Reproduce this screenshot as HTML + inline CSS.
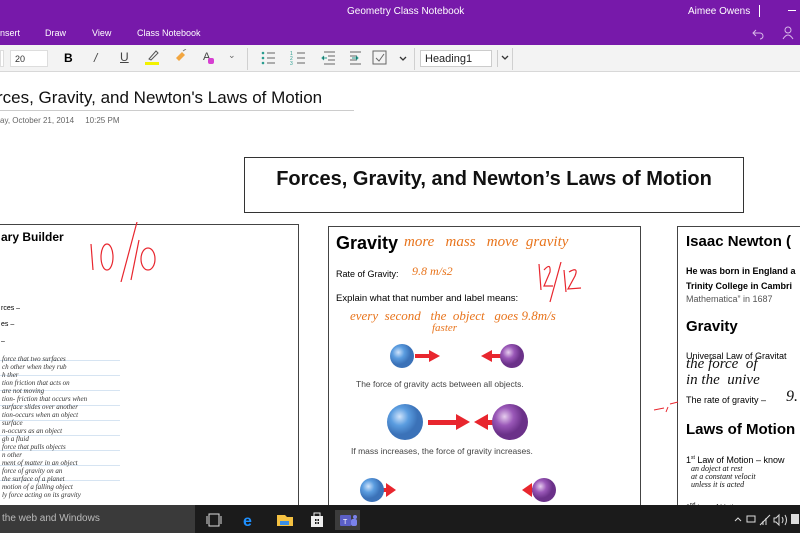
<!DOCTYPE html>
<html><head><meta charset="utf-8"><style>
*{margin:0;padding:0;box-sizing:border-box}
body{width:800px;height:533px;overflow:hidden;background:#fff;font-family:"Liberation Sans",sans-serif;position:relative}
.a{position:absolute}
.hw{position:absolute;font-family:"Liberation Serif",serif;font-style:italic;color:#e8741c;white-space:nowrap}
.card{position:absolute;border:1.5px solid #444;background:#fff}
.cal{font-family:"Liberation Sans",sans-serif}
.ln{position:absolute;left:0;width:120px;height:1px;background:#d6e4f2}
.gl{position:absolute;font-family:"Liberation Serif",serif;font-style:italic;font-size:7px;color:#333;white-space:nowrap;left:2px}
</style></head><body>
<div class="a" style="left:0;top:0;width:800px;height:45px;background:#7719aa"></div>
<div class="a" style="left:347px;top:6px;color:#fff;font-size:10px">Geometry Class Notebook</div>
<div class="a" style="left:688px;top:6px;color:#fff;font-size:10px">Aimee Owens</div>
<div class="a" style="left:759px;top:5px;width:1px;height:12px;background:#fff"></div>
<div class="a" style="left:788px;top:10px;width:8px;height:1px;background:#fff"></div>
<div class="a" style="left:0;top:28px;color:#fff;font-size:9px">nsert</div>
<div class="a" style="left:45px;top:28px;color:#fff;font-size:9px">Draw</div>
<div class="a" style="left:92px;top:28px;color:#fff;font-size:9px">View</div>
<div class="a" style="left:137px;top:28px;color:#fff;font-size:9px">Class Notebook</div>
<svg class="a" style="left:752px;top:26px" width="45" height="14"><path d="M4 4 L1 7 L4 10 M1 7 H8 A3 3 0 0 1 8 13" stroke="#d8b8e8" fill="none" stroke-width="1"/><circle cx="36" cy="4" r="3" stroke="#d8b8e8" fill="none"/><path d="M31 13 Q36 5 41 13" stroke="#d8b8e8" fill="none"/></svg>
<div class="a" style="left:0;top:45px;width:800px;height:27px;background:#f3f3f3;border-bottom:1px solid #d8d8d8"></div>
<div class="a" style="left:0;top:50px;width:4px;height:17px;background:#fff;border:1px solid #ddd"></div>
<div class="a" style="left:10px;top:50px;width:38px;height:17px;background:#fff;border:1px solid #ddd;font-size:9px;padding:3px 0 0 4px;color:#333">20</div>
<div class="a" style="left:64px;top:51px;font-size:12px;font-weight:bold">B</div>
<div class="a" style="left:94px;top:51px;font-size:12px;font-style:italic;color:#444">/</div>
<div class="a" style="left:120px;top:50px;font-size:12px;text-decoration:underline;color:#444">U</div>
<div class="a" style="left:145px;top:62px;width:14px;height:3px;background:#f2f200"></div>
<svg class="a" style="left:147px;top:49px" width="12" height="12"><path d="M2 10 L9 2 L11 4 L4 11Z" stroke="#555" fill="none"/></svg>
<svg class="a" style="left:174px;top:49px" width="14" height="14"><path d="M2 9 L8 3 L11 6 L5 12Z" fill="#f2a640"/><path d="M9 2 L12 0" stroke="#777"/></svg>
<div class="a" style="left:203px;top:51px;font-size:11px;color:#444">A</div>
<div class="a" style="left:208px;top:58px;width:6px;height:6px;background:#d63fd1;border-radius:2px"></div>
<div class="a" style="left:228px;top:50px;font-size:9px;color:#666">⌄</div>
<div class="a" style="left:247px;top:48px;width:1px;height:22px;background:#d0d0d0"></div>
<svg class="a" style="left:260px;top:50px" width="160" height="16"><g fill="#2a9d8f"><circle cx="3" cy="3" r="1.3"/><circle cx="3" cy="8" r="1.3"/><circle cx="3" cy="13" r="1.3"/></g><g stroke="#666"><path d="M7 3H15M7 8H15M7 13H15"/><path d="M37 3H45M37 8H45M37 13H45"/><path d="M64 2H75M68 6H75M68 10H75M64 14H75"/><path d="M90 2H101M90 6H97M90 10H97M90 14H101"/></g><g fill="#2a9d8f" font-size="5"><text x="30" y="5">1</text><text x="30" y="10">2</text><text x="30" y="15">3</text></g><path d="M67 8 L62 8 M64 6 L62 8 L64 10" stroke="#2a9d8f"/><path d="M92 8 L98 8 M96 6 L98 8 L96 10" stroke="#2a9d8f"/><rect x="113" y="1" width="13" height="13" stroke="#666" fill="none"/><path d="M116 8 L119 11 L124 4" stroke="#666" fill="none"/><path d="M140 7 L143 10 L146 7" stroke="#333" fill="none" stroke-width="1.3"/></svg>
<div class="a" style="left:414px;top:48px;width:1px;height:22px;background:#d0d0d0"></div>
<div class="a" style="left:420px;top:50px;width:72px;height:17px;background:#fff;border:1px solid #ccc;font-size:11px;padding:2px 0 0 4px;color:#222">Heading1</div>
<div class="a" style="left:497px;top:50px;width:1px;height:17px;background:#ccc"></div>
<svg class="a" style="left:501px;top:55px" width="10" height="6"><path d="M1 1 L4 4 L7 1" stroke="#333" fill="none" stroke-width="1.3"/></svg>
<div class="a" style="left:512px;top:48px;width:1px;height:22px;background:#d0d0d0"></div>
<div class="a" style="left:-3px;top:88px;font-size:17px;color:#111">rces, Gravity, and Newton's Laws of Motion</div>
<div class="a" style="left:0;top:110px;width:354px;height:1px;background:#ccc"></div>
<div class="a" style="left:0;top:116px;font-size:8px;color:#666">ay, October 21, 2014&nbsp;&nbsp;&nbsp;&nbsp;&nbsp;10:25 PM</div>
<div class="a cal" style="left:244px;top:157px;width:500px;height:56px;border:1.5px solid #333;font-size:20px;font-weight:bold;text-align:center;padding-top:10px;color:#111">Forces, Gravity, and Newton’s Laws of Motion</div>
<div class="card" style="left:-3px;top:224px;width:302px;height:290px">
<div class="a" style="left:3px;top:5px;font-size:12px;font-weight:bold">ary Builder</div>
<div class="a" style="left:3px;top:80px;font-size:7px">rces –</div>
<div class="a" style="left:3px;top:96px;font-size:7px">es –</div>
<div class="a" style="left:3px;top:113px;font-size:7px">–</div>
</div>
<svg class="a" style="left:85px;top:222px" width="80" height="60"><g stroke="#e8262e" fill="none" stroke-width="1.2"><path d="M6 22 L8 48"/><ellipse cx="22" cy="35" rx="6" ry="13"/><path d="M52 0 L36 60"/><path d="M54 18 L46 58"/><ellipse cx="63" cy="37" rx="7" ry="11"/></g></svg>
<div class="a" style="left:0;top:355px;width:120px;height:150px">
<div class="ln" style="top:5px"></div><div class="ln" style="top:20px"></div><div class="ln" style="top:35px"></div><div class="ln" style="top:50px"></div><div class="ln" style="top:65px"></div><div class="ln" style="top:80px"></div><div class="ln" style="top:95px"></div><div class="ln" style="top:110px"></div><div class="ln" style="top:125px"></div>
<div class="gl" style="top:0">force that two surfaces</div>
<div class="gl" style="top:8px">ch other when they rub</div>
<div class="gl" style="top:16px">h ther</div>
<div class="gl" style="top:24px">tion friction that acts on</div>
<div class="gl" style="top:32px">are not moving</div>
<div class="gl" style="top:40px">tion- friction that occurs when</div>
<div class="gl" style="top:48px">surface slides over another</div>
<div class="gl" style="top:56px">tion-occurs when an object</div>
<div class="gl" style="top:64px">surface</div>
<div class="gl" style="top:72px">n-occurs as an object</div>
<div class="gl" style="top:80px">gh a fluid</div>
<div class="gl" style="top:88px">force that pulls objects</div>
<div class="gl" style="top:96px">n other</div>
<div class="gl" style="top:104px">ment of matter in an object</div>
<div class="gl" style="top:112px">force of gravity on an</div>
<div class="gl" style="top:120px">the surface of a planet</div>
<div class="gl" style="top:128px">motion of a falling object</div>
<div class="gl" style="top:136px">ly force acting on its gravity</div>
</div>
<div class="card cal" style="left:328px;top:226px;width:313px;height:290px">
<div class="a" style="left:7px;top:6px;font-size:18px;font-weight:bold">Gravity</div>
<div class="a" style="left:7px;top:42px;font-size:9px">Rate of Gravity:</div>
<div class="a" style="left:7px;top:66px;font-size:9.5px">Explain what that number and label means:</div>
<div class="a" style="left:27px;top:152px;font-size:8.5px;color:#444">The force of gravity acts between all objects.</div>
<div class="a" style="left:22px;top:219px;font-size:8.5px;color:#444">If mass increases, the force of gravity increases.</div>
</div>
<div class="hw" style="left:404px;top:234px;font-size:15px">more&nbsp;&nbsp;&nbsp;mass&nbsp;&nbsp;&nbsp;move&nbsp;&nbsp;gravity</div>
<div class="hw" style="left:412px;top:264px;font-size:12px">9.8 m/s2</div>
<div class="hw" style="left:350px;top:308px;font-size:13px">every&nbsp;&nbsp;second&nbsp;&nbsp;&nbsp;the&nbsp;&nbsp;object&nbsp;&nbsp;&nbsp;goes 9.8m/s</div>
<div class="hw" style="left:432px;top:322px;font-size:11px">faster</div>
<svg class="a" style="left:535px;top:262px" width="50" height="42"><g stroke="#e8262e" fill="none" stroke-width="1.2"><path d="M4 2 L6 28"/><path d="M9 8 Q16 0 15 10 L9 24 L18 24"/><path d="M26 0 L15 40"/><path d="M29 8 L31 30"/><path d="M34 10 Q44 4 40 14 L33 27 L46 26"/></g></svg>
<svg class="a" style="left:330px;top:330px" width="300" height="180">
<defs><radialGradient id="b" cx=".35" cy=".35"><stop offset="0" stop-color="#cfe3fb"/><stop offset=".5" stop-color="#5b9de0"/><stop offset="1" stop-color="#3b72b8"/></radialGradient><radialGradient id="p" cx=".35" cy=".35"><stop offset="0" stop-color="#e6cdee"/><stop offset=".5" stop-color="#9a58b8"/><stop offset="1" stop-color="#6b3189"/></radialGradient></defs>
<g fill="#e8262e">
<rect x="85" y="24" width="16" height="4"/><path d="M99 20 L110 26 L99 32Z"/>
<rect x="160" y="24" width="16" height="4"/><path d="M162 20 L151 26 L162 32Z"/>
<rect x="98" y="90" width="30" height="5"/><path d="M126 84 L140 92 L126 100Z"/>
<rect x="156" y="90" width="30" height="5"/><path d="M158 84 L144 92 L158 100Z"/>
<rect x="50" y="158" width="8" height="4"/><path d="M56 153 L66 160 L56 167Z"/>
<rect x="200" y="158" width="8" height="4"/><path d="M202 153 L192 160 L202 167Z"/>
</g>
<circle cx="72" cy="26" r="12" fill="url(#b)"/><circle cx="182" cy="26" r="12" fill="url(#p)"/>
<circle cx="75" cy="92" r="18" fill="url(#b)"/><circle cx="180" cy="92" r="18" fill="url(#p)"/>
<circle cx="42" cy="160" r="12" fill="url(#b)"/><circle cx="214" cy="160" r="12" fill="url(#p)"/>
</svg>
<div class="card cal" style="left:677px;top:226px;width:130px;height:290px">
<div class="a" style="left:8px;top:6px;font-size:15px;font-weight:bold;white-space:nowrap">Isaac Newton (</div>
<div class="a" style="left:8px;top:37px;font-size:9px;line-height:15px;font-weight:bold;white-space:nowrap">He was born in England a<br>Trinity College in Cambri</div>
<div class="a" style="left:8px;top:67px;font-size:9px;color:#555;white-space:nowrap">Mathematica” in 1687</div>
<div class="a" style="left:8px;top:91px;font-size:15px;font-weight:bold">Gravity</div>
<div class="a" style="left:8px;top:124px;font-size:9px;white-space:nowrap">Universal Law of Gravitat</div>
<div class="a" style="left:8px;top:168px;font-size:9px;white-space:nowrap">The rate of gravity –</div>
<div class="a" style="left:8px;top:194px;font-size:15px;font-weight:bold;white-space:nowrap">Laws of Motion</div>
<div class="a" style="left:8px;top:228px;font-size:9px;white-space:nowrap">1<sup style="font-size:5px">st</sup> Law of Motion – know</div>
<div class="a" style="left:8px;top:275px;font-size:7px;white-space:nowrap">2<sup style="font-size:5px">nd</sup> Law of Motion</div>
</div>
<div class="hw" style="left:686px;top:356px;font-size:15px;color:#111">the force&nbsp;&nbsp;of</div>
<div class="hw" style="left:686px;top:372px;font-size:15px;color:#111">in the&nbsp;&nbsp;unive</div>
<div class="hw" style="left:786px;top:388px;font-size:16px;color:#111">9.</div>
<div class="hw" style="left:691px;top:465px;font-size:8px;color:#111;line-height:8px">an doject at rest<br>at a constant velocit<br>unless it is acted</div>
<svg class="a" style="left:652px;top:400px" width="30" height="20"><path d="M2 10 L12 8 M16 7 L14 12 M18 4 L26 2" stroke="#e8262e" fill="none"/></svg>
<div class="a" style="left:0;top:505px;width:800px;height:28px;background:#1b1b1b"></div>
<div class="a" style="left:0;top:505px;width:195px;height:28px;background:#3a3a3a;color:#bbb;font-size:10px;padding:8px 0 0 2px">the web and Windows</div>
<svg class="a" style="left:205px;top:510px" width="165" height="20">
<rect x="4" y="4" width="10" height="12" stroke="#ddd" fill="none"/><path d="M2 6V14M16 6V14" stroke="#ddd"/>
<text x="38" y="16" font-size="16" font-weight="bold" fill="#1e90ff" font-family="Liberation Sans">e</text>
<path d="M72 5H80L82 7H88V16H72Z" fill="#f5c242"/><rect x="75" y="11" width="9" height="4" fill="#3a8ee6"/>
<path d="M106 6H118V17H106Z" fill="#eee"/><path d="M109 6V3H115V6" stroke="#eee" fill="none"/><path d="M110 9H114V14H110Z" fill="#1b1b1b"/><path d="M112 9V14M110 11.5H114" stroke="#eee"/>
<rect x="130" y="-5" width="25" height="28" fill="#3c3c3c"/><rect x="130" y="21" width="25" height="2" fill="#8ab4f8"/>
<rect x="135" y="5" width="11" height="11" rx="1" fill="#5b5fc7"/><circle cx="150" cy="7" r="2" fill="#7b83eb"/><rect x="146" y="9" width="6" height="7" rx="2" fill="#7b83eb"/><text x="138" y="14" font-size="7" fill="#fff" font-family="Liberation Sans">T</text>
</svg>
<svg class="a" style="left:700px;top:510px" width="100" height="20"><g stroke="#ddd" fill="none"><path d="M35 11 L38 8 L41 11"/><rect x="47" y="6" width="8" height="6"/><path d="M60 15 L70 5 M63 15V11M66 15V8"/><path d="M74 8H76L79 5V15L76 12H74Z M82 7Q84 10 82 13 M85 5Q88 10 85 15"/></g><rect x="91" y="4" width="8" height="10" fill="#ddd"/></svg>
</body></html>
